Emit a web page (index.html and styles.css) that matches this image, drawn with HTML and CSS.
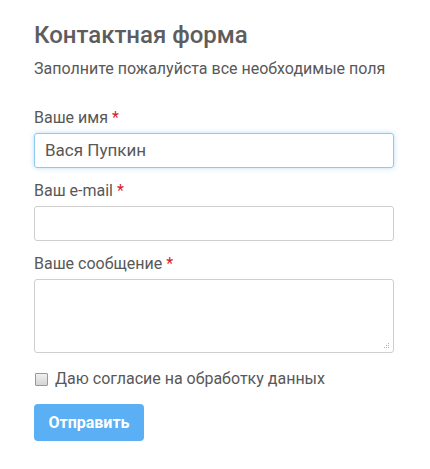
FILE: index.html
```html
<!DOCTYPE html>
<html lang="ru">
<head>
<meta charset="utf-8">
<link rel="stylesheet" href="styles.css">
</head>
<body>
<form class="form">
  <h1 class="title">Контактная форма</h1>
  <p class="subtitle">Заполните пожалуйста все необходимые поля</p>
  <div class="field first">
    <label class="label">Ваше имя <span class="req">*</span></label>
    <div class="input focus">Вася Пупкин</div>
  </div>
  <div class="field">
    <label class="label">Ваш e-mail <span class="req">*</span></label>
    <div class="input"></div>
  </div>
  <div class="field">
    <label class="label">Ваше сообщение <span class="req">*</span></label>
    <div class="textarea">
      <svg class="grip" width="7" height="7" viewBox="0 0 7 7"><g fill="#b0b0b0"><rect x="5" y="1" width="1" height="1"/><rect x="3" y="3" width="1" height="1"/><rect x="5" y="3" width="1" height="1"/><rect x="1" y="5" width="1" height="1"/><rect x="3" y="5" width="1" height="1"/><rect x="5" y="5" width="1" height="1"/></g></svg>
    </div>
  </div>
  <label class="agree"><span class="check"></span><span>Даю согласие на обработку данных</span></label>
  <div class="actions"><span class="button">Отправить</span></div>
</form>
</body>
</html>
```
FILE: styles.css
```css
html, body {
  margin: 0;
  padding: 0;
  background: #fff;
}
body {
  font-family: Roboto, "Liberation Sans", sans-serif;
  color: #585858;
}
.form {
  padding: 21px 36px 0 34px;
  display: flex;
  flex-direction: column;
}
.title {
  margin: 0;
  font-size: 24px;
  font-weight: 500;
  line-height: 28px;
  color: #5d5d5d;
}
.subtitle {
  margin: 10px 0 0;
  font-size: 16px;
  line-height: 20px;
}
.field {
  display: flex;
  flex-direction: column;
}
.label {
  font-size: 16px;
  line-height: 20px;
  margin-top: 13px;
  margin-bottom: 5px;
}
.field.first .label { margin-top: 29px; }
.req { color: #d9201f; }
.input {
  box-sizing: border-box;
  height: 35px;
  border: 1px solid #cfcfcf;
  border-radius: 3px;
  padding: 0 10px;
  font-size: 17px;
  line-height: 33px;
  color: #585858;
}
.input.focus {
  border-color: #8ec9f2;
  box-shadow: 0 0 5px rgba(100, 180, 240, 0.45);
}
.textarea {
  box-sizing: border-box;
  height: 74px;
  border: 1px solid #cfcfcf;
  border-radius: 3px;
  position: relative;
}
.grip {
  position: absolute;
  right: 3px;
  bottom: 3px;
}
.agree {
  display: flex;
  align-items: center;
  gap: 7px;
  margin-top: 16px;
  font-size: 16px;
  line-height: 20px;
}
.check {
  box-sizing: border-box;
  width: 13px;
  height: 13px;
  margin-left: 1px;
  border: 1px solid #999;
  border-radius: 1px;
  background: linear-gradient(#f0f0f0, #d4d4d4);
}
.actions {
  margin-top: 15px;
  display: flex;
}
.button {
  width: 110px;
  height: 37px;
  box-sizing: border-box;
  display: flex;
  align-items: center;
  justify-content: center;
  background: #5aaff5;
  border-radius: 4px;
  color: #fff;
  font-weight: 700;
  font-size: 16px;
}
```
